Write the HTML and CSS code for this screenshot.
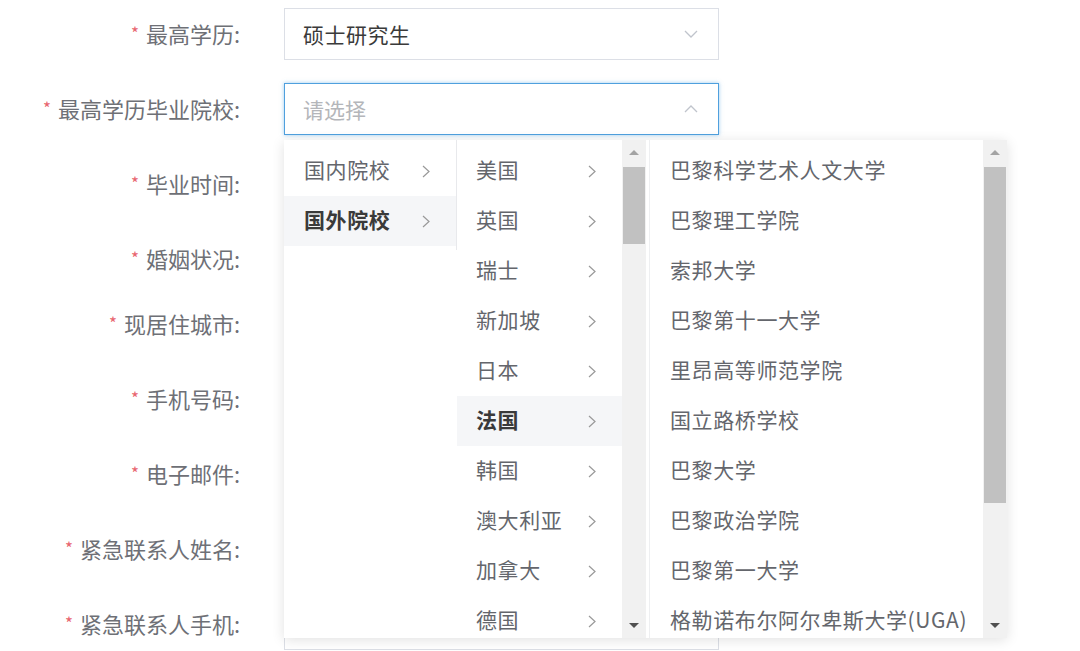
FILE: index.html
```html
<!DOCTYPE html>
<html lang="zh-CN">
<head>
<meta charset="utf-8">
<title>表单</title>
<link rel="stylesheet" href="styles.css">
</head>
<body>
<form class="form">
  <div class="item">
    <label class="label"><span class="req">*</span>最高学历:</label>
    <div class="select"><span class="value">硕士研究生</span>
      <svg class="caret" width="14" height="8" viewBox="0 0 14 8"><polyline points="1,1 7,7 13,1" fill="none" stroke="#c0c4cc" stroke-width="1.3"/></svg>
    </div>
  </div>
  <div class="item">
    <label class="label"><span class="req">*</span>最高学历毕业院校:</label>
    <div class="select focus"><span class="placeholder">请选择</span>
      <svg class="caret" width="14" height="8" viewBox="0 0 14 8"><polyline points="1,7 7,1 13,7" fill="none" stroke="#c0c4cc" stroke-width="1.3"/></svg>
    </div>
  </div>
  <div class="item">
    <label class="label"><span class="req">*</span>毕业时间:</label>
    <div class="select"></div>
  </div>
  <div class="item short">
    <label class="label"><span class="req">*</span>婚姻状况:</label>
    <div class="select"></div>
  </div>
  <div class="item">
    <label class="label"><span class="req">*</span>现居住城市:</label>
    <div class="select"></div>
  </div>
  <div class="item">
    <label class="label"><span class="req">*</span>手机号码:</label>
    <div class="select"></div>
  </div>
  <div class="item">
    <label class="label"><span class="req">*</span>电子邮件:</label>
    <div class="select"></div>
  </div>
  <div class="item">
    <label class="label"><span class="req">*</span>紧急联系人姓名:</label>
    <div class="select"></div>
  </div>
  <div class="item">
    <label class="label"><span class="req">*</span>紧急联系人手机:</label>
    <div class="select"></div>
  </div>

  <div class="popup">
    <div class="menu m1">
      <ul class="list">
        <li class="opt">国内院校<svg class="arr" width="8" height="13" viewBox="0 0 8 13"><polyline points="1,1 7,6.5 1,12" fill="none" stroke="#999" stroke-width="1.2"/></svg></li>
        <li class="opt active">国外院校<svg class="arr" width="8" height="13" viewBox="0 0 8 13"><polyline points="1,1 7,6.5 1,12" fill="none" stroke="#999" stroke-width="1.2"/></svg></li>
      </ul>
    </div>
    <div class="menu m2">
      <ul class="list">
        <li class="opt">美国<svg class="arr" width="8" height="13" viewBox="0 0 8 13"><polyline points="1,1 7,6.5 1,12" fill="none" stroke="#999" stroke-width="1.2"/></svg></li>
        <li class="opt">英国<svg class="arr" width="8" height="13" viewBox="0 0 8 13"><polyline points="1,1 7,6.5 1,12" fill="none" stroke="#999" stroke-width="1.2"/></svg></li>
        <li class="opt">瑞士<svg class="arr" width="8" height="13" viewBox="0 0 8 13"><polyline points="1,1 7,6.5 1,12" fill="none" stroke="#999" stroke-width="1.2"/></svg></li>
        <li class="opt">新加坡<svg class="arr" width="8" height="13" viewBox="0 0 8 13"><polyline points="1,1 7,6.5 1,12" fill="none" stroke="#999" stroke-width="1.2"/></svg></li>
        <li class="opt">日本<svg class="arr" width="8" height="13" viewBox="0 0 8 13"><polyline points="1,1 7,6.5 1,12" fill="none" stroke="#999" stroke-width="1.2"/></svg></li>
        <li class="opt active">法国<svg class="arr" width="8" height="13" viewBox="0 0 8 13"><polyline points="1,1 7,6.5 1,12" fill="none" stroke="#999" stroke-width="1.2"/></svg></li>
        <li class="opt">韩国<svg class="arr" width="8" height="13" viewBox="0 0 8 13"><polyline points="1,1 7,6.5 1,12" fill="none" stroke="#999" stroke-width="1.2"/></svg></li>
        <li class="opt">澳大利亚<svg class="arr" width="8" height="13" viewBox="0 0 8 13"><polyline points="1,1 7,6.5 1,12" fill="none" stroke="#999" stroke-width="1.2"/></svg></li>
        <li class="opt">加拿大<svg class="arr" width="8" height="13" viewBox="0 0 8 13"><polyline points="1,1 7,6.5 1,12" fill="none" stroke="#999" stroke-width="1.2"/></svg></li>
        <li class="opt">德国<svg class="arr" width="8" height="13" viewBox="0 0 8 13"><polyline points="1,1 7,6.5 1,12" fill="none" stroke="#999" stroke-width="1.2"/></svg></li>
      </ul>
      <div class="sbar">
        <span class="up"></span>
        <div class="track"><div class="thumb t2"></div></div>
        <span class="down"></span>
      </div>
    </div>
    <div class="menu m3">
      <ul class="list">
        <li class="opt">巴黎科学艺术人文大学</li>
        <li class="opt">巴黎理工学院</li>
        <li class="opt">索邦大学</li>
        <li class="opt">巴黎第十一大学</li>
        <li class="opt">里昂高等师范学院</li>
        <li class="opt">国立路桥学校</li>
        <li class="opt">巴黎大学</li>
        <li class="opt">巴黎政治学院</li>
        <li class="opt">巴黎第一大学</li>
        <li class="opt">格勒诺布尔阿尔卑斯大学(UGA)</li>
      </ul>
      <div class="sbar">
        <span class="up"></span>
        <div class="track"><div class="thumb t3"></div></div>
        <span class="down"></span>
      </div>
    </div>
  </div>
</form>
</body>
</html>
```

FILE: styles.css
```css
html, body {
  margin: 0;
  padding: 0;
  background: #ffffff;
}
body {
  font-family: "Noto Sans CJK SC", "Noto Sans", sans-serif;
  width: 1080px;
  height: 651px;
  overflow: hidden;
}
.form {
  position: relative;
  padding-top: 8px;
}
.item {
  display: flex;
  align-items: center;
  height: 52px;
  margin-bottom: 23px;
}
.item.short {
  margin-bottom: 13px;
}
.label {
  width: 240px;
  text-align: right;
  font-size: 22px;
  color: #6e7076;
  margin-right: 44px;
  white-space: nowrap;
  position: relative;
  top: -1px;
}
.req {
  color: #e8646e;
  font-size: 17px;
  margin-right: 7px;
  position: relative;
  top: -3px;
}
.select {
  box-sizing: border-box;
  width: 435px;
  height: 52px;
  border: 1px solid #dcdfe6;
  display: flex;
  align-items: center;
  justify-content: space-between;
  padding: 0 20px 0 18px;
  background: #fff;
  font-size: 21px;
}
.select.focus {
  border-color: #4fa0de;
  box-shadow: 0 0 4px rgba(79, 160, 222, 0.55);
}
.value {
  color: #3a3a3a;
  letter-spacing: 0.5px;
}
.placeholder {
  color: #b4b6ba;
}
.caret {
  display: block;
}
.popup {
  position: absolute;
  left: 284px;
  top: 140px;
  width: 723px;
  height: 498px;
  background: #fff;
  box-shadow: 0 2px 12px rgba(0, 0, 0, 0.12);
  display: flex;
  overflow: hidden;
}
.menu {
  position: relative;
  height: 100%;
  display: flex;
}
.list {
  list-style: none;
  margin: 0;
  padding: 6px 0;
  font-size: 21px;
  color: #64666c;
  letter-spacing: 0.6px;
}
.opt {
  box-sizing: border-box;
  height: 50px;
  padding-bottom: 4px;
  display: flex;
  align-items: center;
  justify-content: space-between;
  white-space: nowrap;
}
.arr {
  display: block;
  margin-top: 5px;
}
.opt.active {
  background: #f5f6f8;
  color: #3a3a3a;
  font-weight: 700;
}
.m1 {
  width: 173px;
  align-items: flex-start;
}
.m1 .list {
  width: 172px;
  padding-bottom: 4px;
  border-right: 1px solid #e8e9ec;
}
.m1 .opt {
  padding-left: 20px;
  padding-right: 26px;
}
.m2 {
  width: 193px;
  border-right: 1px solid #eeeff1;
  box-sizing: border-box;
}
.m2 .list {
  width: 165px;
  height: 100%;
  overflow: hidden;
  box-sizing: border-box;
}
.m2 .opt {
  padding-left: 19px;
  padding-right: 26px;
}
.m3 {
  width: 357px;
}
.m3 .list {
  width: 333px;
  height: 100%;
  box-sizing: border-box;
  overflow: hidden;
}
.m3 .opt {
  padding-left: 20px;
}
.sbar {
  width: 24px;
  height: 100%;
  background: #f1f1f1;
  display: flex;
  flex-direction: column;
  align-items: center;
}
.m2 .sbar {
  margin-right: 3px;
}
.up {
  margin-top: 10px;
  width: 0;
  height: 0;
  border-left: 5px solid transparent;
  border-right: 5px solid transparent;
  border-bottom: 5px solid #a3a3a3;
}
.down {
  margin-bottom: 10px;
  width: 0;
  height: 0;
  border-left: 5px solid transparent;
  border-right: 5px solid transparent;
  border-top: 5px solid #505050;
}
.track {
  flex: 1;
  width: 100%;
  padding: 12px 1px 0;
  box-sizing: border-box;
}
.thumb {
  background: #c1c1c1;
  width: 100%;
}
.t2 {
  height: 77px;
}
.t3 {
  height: 336px;
}
```
